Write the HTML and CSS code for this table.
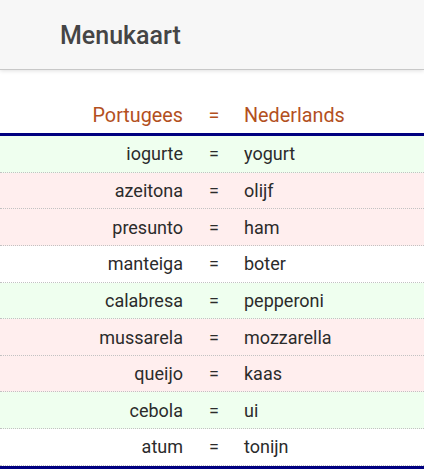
FILE: index.html
```html
<!DOCTYPE html>
<html lang="nl">
<head>
<meta charset="utf-8">
<title>Menukaart</title>
<link rel="stylesheet" href="styles.css">
</head>
<body>
<header class="topbar">
  <h1 class="title">Menukaart</h1>
</header>
<main class="content">
  <div class="table">
    <div class="row head">
      <span class="pt">Portugees</span><span class="eq">=</span><span class="nl">Nederlands</span>
    </div>
    <div class="row green"><span class="pt">iogurte</span><span class="eq">=</span><span class="nl">yogurt</span></div>
    <div class="row pink"><span class="pt">azeitona</span><span class="eq">=</span><span class="nl">olijf</span></div>
    <div class="row pink"><span class="pt">presunto</span><span class="eq">=</span><span class="nl">ham</span></div>
    <div class="row white"><span class="pt">manteiga</span><span class="eq">=</span><span class="nl">boter</span></div>
    <div class="row green"><span class="pt">calabresa</span><span class="eq">=</span><span class="nl">pepperoni</span></div>
    <div class="row pink"><span class="pt">mussarela</span><span class="eq">=</span><span class="nl">mozzarella</span></div>
    <div class="row pink"><span class="pt">queijo</span><span class="eq">=</span><span class="nl">kaas</span></div>
    <div class="row green"><span class="pt">cebola</span><span class="eq">=</span><span class="nl">ui</span></div>
    <div class="row white"><span class="pt">atum</span><span class="eq">=</span><span class="nl">tonijn</span></div>
  </div>
</main>
</body>
</html>
```
FILE: styles.css
```css
html, body {
  margin: 0;
  padding: 0;
  background: #ffffff;
  font-family: Roboto, "Noto Sans", sans-serif;
}

.topbar {
  height: 69px;
  background: #f7f7f7;
  border-bottom: 1px solid #c8c8c8;
  box-shadow: 0 1px 4px rgba(0, 0, 0, 0.12);
  display: flex;
  align-items: center;
  padding-left: 60px;
  position: relative;
  z-index: 1;
}

.title {
  margin: 0;
  font-size: 25px;
  font-weight: 500;
  color: #454545;
  line-height: 1;
  padding-top: 2px;
}

.content {
  padding-top: 28px;
}

.table {
  display: flex;
  flex-direction: column;
  border-bottom: 3px solid #00007f;
}

.row {
  display: grid;
  grid-template-columns: 183px 61px 1fr;
  align-items: center;
  height: 35.65px;
  font-size: 18px;
  color: #2b2b2b;
  border-bottom: 1px dotted #c2c2c2;
}

.row .pt { text-align: right; }
.row .eq { text-align: center; padding-left: 1px; }
.row .nl { text-align: left; }

.head {
  height: 35px;
  font-size: 19.8px;
  color: #b3501e;
  border-bottom: 3px solid #00007f;
}

.green { background: #efffef; }
.pink { background: #ffeeee; }
.white { background: #ffffff; }
```
